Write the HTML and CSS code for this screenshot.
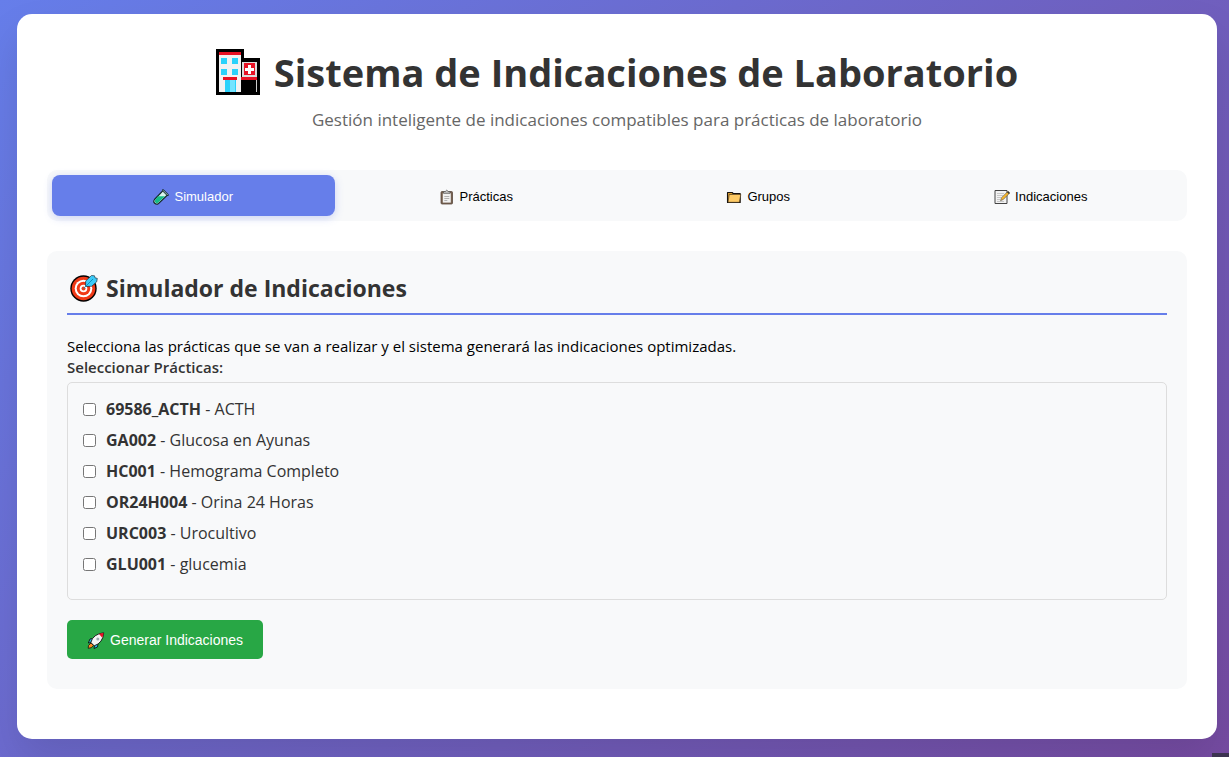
FILE: index.html
```html
<!DOCTYPE html>
<html lang="es">
<head>
<meta charset="utf-8">
<meta name="viewport" content="width=device-width, initial-scale=1">
<title>Sistema de Indicaciones de Laboratorio</title>
<link rel="stylesheet" href="styles.css">
</head>
<body>
<main class="container">
  <header class="header">
    <h1 class="title">
      <svg class="icon-hospital" viewBox="0 0 44 46" aria-hidden="true">
        <path d="M0 0h28v9h16v37H0z" fill="#000"/>
        <path d="M3 3h22v40H3z" fill="#f2f2f2"/>
        <path d="M3 3h22v3H3zM7 28h14v3H7zM25 28h16v3H25z" fill="#e81224"/>
        <path d="M5 9h6v6H5zM16 9h6v6h-6zM5 20h6v6H5zM16 20h6v6h-6zM9 31h11v12H9z" fill="#2bd2fb"/>
        <path d="M14 31h5v12h-5z" fill="#73e4ff"/>
        <path d="M26 13h15v15H26z" fill="#ddd"/>
        <path d="M28 14h11v12H28z" fill="#e81224"/>
        <path d="M32 16h3v3h3v3h-3v3h-3v-3h-3v-3h3z" fill="#fff"/>
        <path d="M40.500 31v12" stroke="#ccc"/>
      </svg>
      <span>Sistema de Indicaciones de Laboratorio</span>
    </h1>
    <p class="subtitle">Gestión inteligente de indicaciones compatibles para prácticas de laboratorio</p>
  </header>

  <nav class="tabs">
    <button class="tab tab-active" type="button">
      <svg class="icon" viewBox="0 0 16 16" aria-hidden="true">
        <path d="M10 1.500L14.500 6 5.500 14.500Q3.500 16 1.700 14.300T1.500 10.500z" fill="#d8f5ee" stroke="#152a2c" stroke-width="1.200"/>
        <path d="M5 7.300L12 7.200 5 13.800Q3.600 14.900 2.400 13.600T2.200 10.800z" fill="#16bd87"/>
        <path d="M10 1.300l4.700 4.700" stroke="#152a2c" stroke-width="2" stroke-linecap="round"/>
        <path d="M10 1.300l4.700 4.700" stroke="#b9e5df" stroke-width=".8"/>
      </svg>Simulador</button>
    <button class="tab" type="button">
      <svg class="icon" viewBox="0 0 16 16" aria-hidden="true">
        <rect x="2" y="2.500" width="11.500" height="12.500" rx="1" fill="#75604f" stroke="#5a4a40" stroke-width=".8"/>
        <path d="M3.800 4.200h8v9.400h-8z" fill="#f1f1f1"/>
        <path d="M5.300 7.500h5M5.300 9.500h5M5.300 11.500h3" stroke="#aaa" stroke-width=".9"/>
        <path d="M4.500 4.300V2.500h1.800Q7.700-.2 9.200 2.500H11v1.800z" fill="#c4c4c4" stroke="#555" stroke-width=".7"/>
      </svg>Prácticas</button>
    <button class="tab" type="button">
      <svg class="icon" viewBox="0 0 16 16" aria-hidden="true">
        <path d="M1.500 13.500V3.500h4.700l1 1h7v9z" fill="#d99b2b" stroke="#171310" stroke-width="1.100" stroke-linejoin="round"/>
        <path d="M2 13.300L3.200 5.500h11.600l-1.500 7.800z" fill="#ffcb66" stroke="#33271a" stroke-width=".6" stroke-linejoin="round"/>
      </svg>Grupos</button>
    <button class="tab" type="button">
      <svg class="icon" viewBox="0 0 16 16" aria-hidden="true">
        <path d="M1 1.500h12v13H1z" fill="#f2f2f2" stroke="#444"/>
        <path d="M3 4.500h7M3 6.500h6M3 8.500h4M3 10.500h3M3 12.500h7" stroke="#bbb" stroke-width=".8"/>
        <path d="M6.500 11.700l1-3L14 2.200l1.800 1.700-6.500 6.600z" fill="#f6b52c" stroke="#555" stroke-width=".6"/>
        <path d="M13 3.200l1-1 1.800 1.700-1 1z" fill="#333"/>
      </svg>Indicaciones</button>
  </nav>

  <section class="panel">
    <h2 class="panel-title">
      <svg class="icon-target" viewBox="0 0 28 28" aria-hidden="true">
        <circle cx="13.500" cy="14.500" r="13.200" fill="#000"/>
        <circle cx="13.500" cy="14.500" r="11.800" fill="#f03a17"/>
        <circle cx="13.500" cy="14.500" r="8.800" fill="#fff"/>
        <circle cx="13.500" cy="14.500" r="6.800" fill="#f03a17"/>
        <circle cx="13.500" cy="14.500" r="3.800" fill="#fff"/>
        <circle cx="13.500" cy="14.500" r="2" fill="#f03a17"/>
        <path d="M15.500 12.500l.2-5.500L21.500 1.500l3 .3.500 2 2.300.6-.6 3.400-5 4.500z" fill="#3ccaf8" stroke="#101820" stroke-width=".6" stroke-linejoin="round"/>
        <path d="M13.500 14.500L23 5" stroke="#0b8fbd"/>
      </svg>
      <span>Simulador de Indicaciones</span>
    </h2>
    <p class="intro">Selecciona las prácticas que se van a realizar y el sistema generará las indicaciones optimizadas.</p>
    <form>
      <fieldset class="group">
        <legend class="group-label">Seleccionar Prácticas:</legend>
        <div class="list">
          <label class="option"><input class="check" type="checkbox"><span><strong>69586_ACTH</strong> - ACTH</span></label>
          <label class="option"><input class="check" type="checkbox"><span><strong>GA002</strong> - Glucosa en Ayunas</span></label>
          <label class="option"><input class="check" type="checkbox"><span><strong>HC001</strong> - Hemograma Completo</span></label>
          <label class="option"><input class="check" type="checkbox"><span><strong>OR24H004</strong> - Orina 24 Horas</span></label>
          <label class="option"><input class="check" type="checkbox"><span><strong>URC003</strong> - Urocultivo</span></label>
          <label class="option"><input class="check" type="checkbox"><span><strong>GLU001</strong> - glucemia</span></label>
        </div>
      </fieldset>
      <button class="submit" type="button">
        <svg class="icon-rocket" viewBox="0 0 17 17" aria-hidden="true">
          <path d="M5 6.500L2.500 7 .8 11l3-.5M10.500 12l-.5 3-3.500 1.500.5-3" fill="#25bdec" stroke="#111" stroke-width=".9" stroke-linejoin="round"/>
          <path d="M3.500 11L1 13.500.7 16.300l3-.6L6 13.500z" fill="#ff8b20" stroke="#111" stroke-width=".8"/>
          <path d="M3.300 10.500Q5.500 2 16.200.8 15.500 11 6.700 13.800z" fill="#f4f4f4" stroke="#111" stroke-width=".9" stroke-linejoin="round"/>
          <path d="M11.500 2Q13.500 1.100 16 1q-.2 2.600-1.200 4.700z" fill="#e81224"/>
          <circle cx="10.300" cy="6.900" r="1.500" fill="#9ba9b0"/>
        </svg>Generar Indicaciones</button>
    </form>
  </section>
</main>
<div class="corner"></div>
</body>
</html>
```

FILE: styles.css
```css
* {
  box-sizing: border-box;
  margin: 0;
  padding: 0;
}

body {
  min-height: 100vh;
  padding: 14px 12px 18px 17px;
  display: flex;
  background: linear-gradient(135deg, #667eea 0%, #764ba2 100%);
  font-family: "Segoe UI", "Open Sans", "Noto Sans", sans-serif;
  font-size: 15px;
  line-height: 21px;
  color: #000;
}

.container {
  flex: 1;
  max-width: 1200px;
  margin: 0 auto;
  padding: 30px;
  background: #fff;
  border-radius: 15px;
  box-shadow: 0 20px 40px rgba(0, 0, 0, 0.1);
}

.header {
  margin-bottom: 38px;
  text-align: center;
}

.title {
  display: flex;
  justify-content: center;
  align-items: center;
  gap: 14px;
  margin-bottom: 8px;
  font-size: 38px;
  line-height: 56px;
  color: #333;
}

.icon-hospital {
  width: 44px;
  height: 46px;
}

.subtitle {
  font-size: 17px;
  line-height: 24px;
  color: #666;
}

.tabs {
  display: flex;
  margin-bottom: 30px;
  padding: 5px;
  background: #f8f9fa;
  border-radius: 10px;
}

.tab {
  flex: 1;
  display: flex;
  justify-content: center;
  align-items: center;
  gap: 5px;
  padding: 13px 12px 11px;
  border: 0;
  border-radius: 8px;
  background: transparent;
  font: 500 13px/17px Arial, "Liberation Sans", sans-serif;
  color: #000;
  cursor: pointer;
}

.tab-active {
  background: #667eea;
  color: #fff;
  box-shadow: 0 2px 8px rgba(102, 126, 234, 0.3);
}

.icon {
  width: 16px;
  height: 16px;
  fill: none;
}

.panel {
  margin-bottom: 20px;
  padding: 21px 20px 30px;
  background: #f8f9fa;
  border-radius: 10px;
}

.panel-title {
  display: flex;
  align-items: center;
  gap: 8px;
  margin-bottom: 21px;
  padding: 0 3px 9px;
  border-bottom: 2px solid #667eea;
  font-size: 23px;
  line-height: 32px;
  color: #333;
}

.icon-target {
  width: 28px;
  height: 28px;
}

.group {
  margin-bottom: 20px;
  border: 0;
}

.group-label {
  margin-bottom: 4px;
  font-weight: 600;
  color: #333;
}

.list {
  display: flex;
  flex-direction: column;
  gap: 10px;
  padding: 16px 15px 24px;
  border: 1px solid #ddd;
  border-radius: 5px;
}

.option {
  display: flex;
  align-items: center;
  gap: 10px;
  font-weight: 500;
  font-size: 16px;
  color: #333;
}

.check {
  width: 13px;
  height: 13px;
}

.submit {
  display: flex;
  align-items: center;
  gap: 5px;
  padding: 12px 20px 10px;
  border: 0;
  border-radius: 5px;
  background: #28a745;
  font: 14px/17px Arial, "Liberation Sans", sans-serif;
  color: #fff;
  cursor: pointer;
}

.icon-rocket {
  width: 18px;
  height: 17px;
}

.corner {
  position: fixed;
  right: 0;
  bottom: 0;
  width: 17px;
  height: 4px;
  background: #3c3350;
}
```
